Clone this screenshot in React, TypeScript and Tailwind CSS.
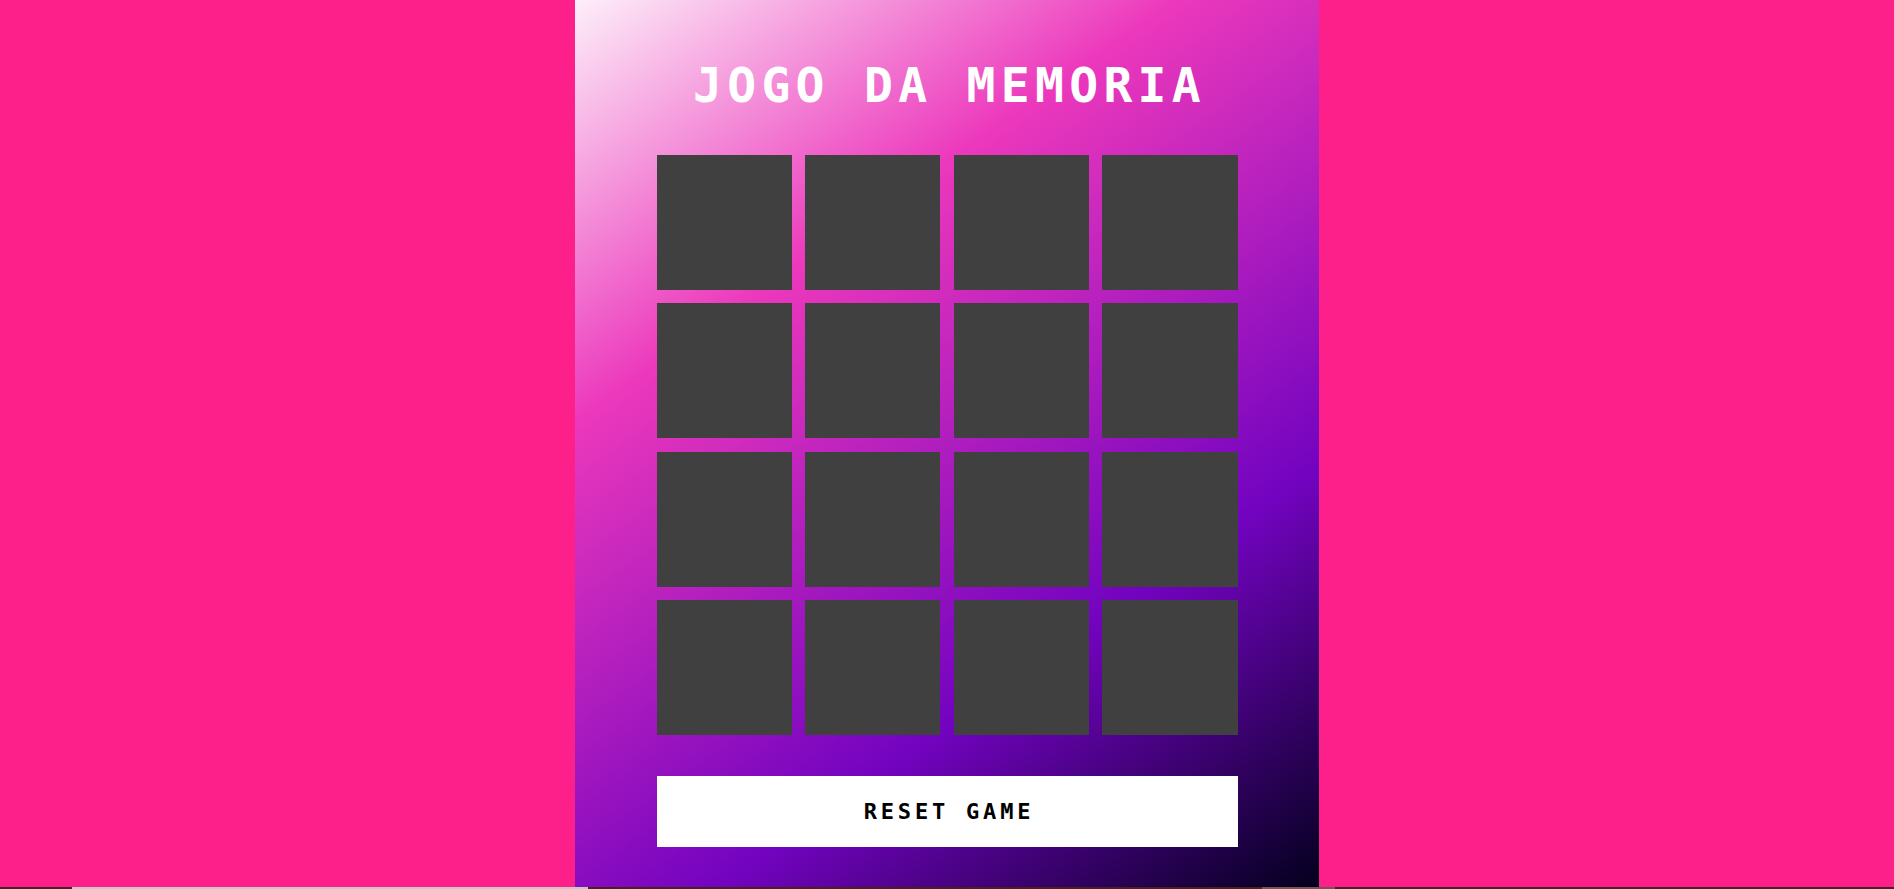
export default function App() {
    const cards = Array.from({ length: 16 }, (_, i) => i);

    return (
        <div className="w-full h-[889px] flex flex-col bg-[#fe208a] overflow-hidden">
            <div className="flex-1 flex justify-center">
                <div className="w-[744px] h-full flex flex-col items-center pt-[61px] bg-[linear-gradient(325deg,#03001e_0%,#7303c0_30%,#ec38bc_70%,#fdeff9_100%)]">
                    <h2 className="text-[48px] leading-none font-bold tracking-[5.3px] pl-[5px] text-white font-['DejaVu_Sans_Mono',monospace]">JOGO DA MEMORIA</h2>

                    <div className="mt-[46px] w-[581px] grid grid-cols-4 gap-x-[13.67px] gap-y-[13.33px]">
                        {cards.map((c) => (
                            <div key={c} className="h-[135px] bg-[#404040]"></div>
                        ))}
                    </div>

                    <button className="mt-[41px] w-[581px] h-[71px] bg-white text-black text-[22px] font-bold tracking-[3.8px] pl-[4px] font-['DejaVu_Sans_Mono',monospace]">RESET GAME</button>
                </div>
            </div>

            {/* thin strip along the bottom edge */}
            <div className="h-[2px] flex bg-[#4a1e22]">
                <div className="w-[72px]"></div>
                <div className="w-[516px] bg-[#c8c8c8]"></div>
                <div className="w-[674px]"></div>
                <div className="w-[73px] bg-[#7a5252]"></div>
            </div>
        </div>
    );
}
